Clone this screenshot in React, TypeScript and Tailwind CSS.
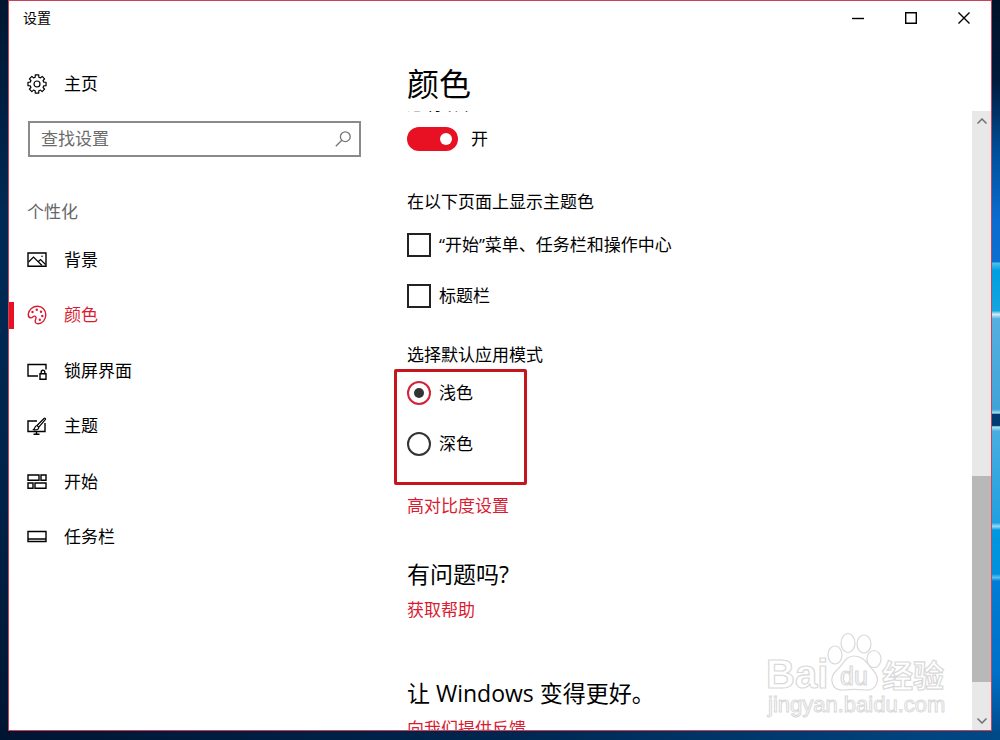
import { useState } from "react";
import type { ReactNode } from "react";

const Icon = ({ children, className = "size-5" }: { children: ReactNode; className?: string }) => (
  <svg viewBox="0 0 20 20" fill="none" stroke="currentColor" strokeWidth="1.4" className={className} aria-hidden="true">
    {children}
  </svg>
);

const gearPoints = Array.from({ length: 8 }, (_, i) => {
  const point = (offset: number, radius: number) => {
    const angle = ((i * 45 + offset) * Math.PI) / 180;
    return `${(10 + radius * Math.cos(angle)).toFixed(2)},${(10 + radius * Math.sin(angle)).toFixed(2)}`;
  };
  return [point(-15, 7), point(-11, 9.2), point(11, 9.2), point(15, 7)].join(" ");
}).join(" ");

const navItems = [
  {
    id: "background",
    label: "背景",
    icon: (
      <Icon>
        <path d="M1 3h18v13.200H1z" />
        <path d="M1.500 12 6.500 7l8.500 8.500M11 12l2.500-2.500 5 5" strokeWidth="1.200" />
        <circle cx="15" cy="6.300" r=".8" fill="currentColor" stroke="none" />
      </Icon>
    ),
  },
  {
    id: "colors",
    label: "颜色",
    icon: (
      <Icon>
        <path d="M1.300 9C1.800 4.500 5.800 1.200 10.500 1.200c4.800 0 8.300 3.800 8.300 8.600 0 5-3.500 8.900-7.800 8.900-2 0-3-1.200-2.800-2.900.2-1.400 1-2 .8-3.300-.3-1.400-1.700-1.800-2.700-1-.9.8-1.300 1.600-2.600 1.400C1.800 12.600 1.100 11 1.300 9Z" />
        <g fill="currentColor" stroke="none">
          <circle cx="5.500" cy="7" r="1.200" />
          <circle cx="9.800" cy="4.700" r="1.200" />
          <circle cx="14" cy="6.700" r="1.200" />
          <circle cx="15.300" cy="11" r="1.200" />
          <circle cx="12.800" cy="14.700" r="1.200" />
        </g>
      </Icon>
    ),
  },
  {
    id: "lockscreen",
    label: "锁屏界面",
    icon: (
      <Icon>
        <path d="M11 15H1V3.500h18v5" />
        <path d="M13 12.700h6v5.500h-6zM14.200 12.500V11a1.800 1.800 0 0 1 3.600 0v1.500" />
      </Icon>
    ),
  },
  {
    id: "themes",
    label: "主题",
    icon: (
      <Icon>
        <path d="M10 5H1v10.500h17V7" />
        <path d="M9.500 15.500v2.500M6.500 18.200h6" />
        <path d="m10 9.500 7-7c1-.8 2 .2 1.300 1.200l-6.500 7.500M10 9.500l1.800 1.700c.2 2.200-2.500 3.200-5.300 2.500 1.500-1 1.200-3.700 3.500-4.200Z" strokeWidth="1.200" />
      </Icon>
    ),
  },
  {
    id: "start",
    label: "开始",
    icon: (
      <Icon>
        <path d="M1 3h11v5.200H1zM14 3h5v5.200h-5zM1 11h5v5.200H1zM8 11h11v5.200H8z" />
      </Icon>
    ),
  },
  {
    id: "taskbar",
    label: "任务栏",
    icon: (
      <Icon>
        <path d="M1 4.500h18v10H1zM1 12h18" />
      </Icon>
    ),
  },
];

const modes = [
  { id: "light", label: "浅色" },
  { id: "dark", label: "深色" },
];

const accentTargets = ["“开始”菜单、任务栏和操作中心", "标题栏"];

const TitleBar = () => (
  <header className="flex h-[34px] shrink-0 items-center justify-between pr-px pl-[14px]">
    <h1 className="text-sm">设置</h1>
    <div className="flex h-full">
      <button aria-label="最小化" className="flex w-[53px] items-center justify-center">
        <svg viewBox="0 0 12 12" className="size-3" stroke="currentColor" strokeWidth="1.400">
          <path d="M0 6.500h12" />
        </svg>
      </button>
      <button aria-label="最大化" className="flex w-[53px] items-center justify-center">
        <svg viewBox="0 0 12 12" className="size-3" fill="none" stroke="currentColor" strokeWidth="1.400">
          <path d="M.7.7h10.600v10.600H.7z" />
        </svg>
      </button>
      <button aria-label="关闭" className="flex w-[53px] items-center justify-center">
        <svg viewBox="0 0 12 12" className="size-3" stroke="currentColor" strokeWidth="1.400">
          <path d="m.5.5 11 11M11.500.5l-11 11" />
        </svg>
      </button>
    </div>
  </header>
);

const Sidebar = ({ active, onSelect }: { active: string; onSelect: (id: string) => void }) => (
  <nav className="flex w-[370px] shrink-0 flex-col">
    <button className="mt-[37px] flex h-6 items-center gap-[17px] pl-[18px]">
      <Icon>
        <polygon points={gearPoints} strokeWidth="1.200" strokeLinejoin="round" />
        <circle cx="10" cy="10" r="3" strokeWidth="1.200" />
      </Icon>
      主页
    </button>
    <div className="mt-[25px] mr-[18px] ml-[19px] flex h-9 items-center border-2 border-[#8a8a8a] pr-2 pl-[11px]">
      <input
        type="text"
        aria-label="查找设置"
        placeholder="查找设置"
        className="min-w-0 flex-1 outline-none placeholder:text-[#6b6b6b]"
      />
      <svg viewBox="0 0 16 16" className="size-4 text-[#777777]" fill="none" stroke="currentColor" strokeWidth="1.300" aria-hidden="true">
        <circle cx="10.300" cy="5.700" r="4.900" />
        <path d="M6.800 9.200.8 15.200" />
      </svg>
    </div>
    <h2 className="mt-[43px] ml-[18px] h-6 leading-6 text-[#666666]">个性化</h2>
    <ul className="mt-2 grid h-[333px] grid-rows-6">
      {navItems.map((item) => (
        <li key={item.id} className="flex items-center">
          <button
            onClick={() => onSelect(item.id)}
            className={`flex h-[27px] w-full items-center gap-[17px] border-l-[5px] pl-[13px] ${
              item.id === active ? "border-[#e81123] text-[#d91c32]" : "border-transparent"
            }`}>
            {item.icon}
            {item.label}
          </button>
        </li>
      ))}
    </ul>
  </nav>
);

const ScrollBar = () => (
  <div className="flex w-[19px] shrink-0 flex-col items-center bg-[#e8e8e8] text-[#707070]">
    <button aria-label="向上滚动" className="flex h-[19px] items-center">
      <svg viewBox="0 0 10 6" className="w-[10px]" fill="none" stroke="currentColor" strokeWidth="1.500">
        <path d="m.5 5.500 4.500-4.500 4.500 4.500" />
      </svg>
    </button>
    <div className="flex w-full flex-1 flex-col">
      <div className="flex-[346]" />
      <div className="w-full flex-[206] bg-[#b8b8b8]" />
      <div className="flex-[29]" />
    </div>
    <button aria-label="向下滚动" className="flex h-[19px] items-center">
      <svg viewBox="0 0 10 6" className="w-[10px]" fill="none" stroke="currentColor" strokeWidth="1.500">
        <path d="m.5.5 4.500 4.500 4.500-4.500" />
      </svg>
    </button>
  </div>
);

const Watermark = () => (
  <svg
    viewBox="0 0 190 95"
    className="pointer-events-none absolute right-[43px] bottom-2 h-[95px] w-[190px]"
    fill="#ffffff"
    stroke="#d9d9d9"
    strokeWidth="1.200"
    aria-hidden="true">
    <g fontFamily="Liberation Sans, Noto Sans CJK SC, sans-serif" fontWeight="bold">
      <text x="8" y="61" fontSize="40">Bai</text>
      <text x="124" y="60" fontSize="31">经验</text>
    </g>
    <ellipse cx="77" cy="28" rx="7" ry="9" />
    <ellipse cx="90" cy="16" rx="7" ry="9.500" />
    <ellipse cx="106" cy="17" rx="7" ry="9" />
    <ellipse cx="116" cy="32" rx="7" ry="8.500" />
    <path d="M96 29c-9 0-11 9-17 14-10 9-4 21 6 20 8-1 14-1 22 0 11 1 17-10 8-20-6-6-9-14-19-14Z" />
    <text x="82" y="58" fontSize="25" fontFamily="Liberation Sans, sans-serif">du</text>
    <text x="10" y="85" fontSize="22" strokeWidth="1" fontFamily="Liberation Sans, sans-serif">jingyan.baidu.com</text>
  </svg>
);

const App = () => {
  const [page, setPage] = useState("colors");
  const [transparency, setTransparency] = useState(true);
  const [mode, setMode] = useState("light");

  return (
    <div className="flex h-screen flex-col bg-[linear-gradient(90deg,#001532,#00264f_50%,#004a87)] font-['Open_Sans','Noto_Sans_CJK_SC',sans-serif] text-[17px] leading-6 text-black">
      <div className="flex min-h-0 flex-1">
        <div className="w-2 shrink-0 bg-[linear-gradient(180deg,#001530,#002a55_30%,#00254c_60%,#001532)]" />
        <div className="relative flex min-w-0 flex-1 flex-col border border-[#c8425a] bg-white">
          <TitleBar />
          <div className="flex min-h-0 flex-1">
            <Sidebar active={page} onSelect={setPage} />
            <main className="flex min-w-0 flex-1 flex-col">
              <h2 className="h-[76px] shrink-0 pt-[25px] pl-7 text-[32px] leading-[48px]">颜色</h2>
              <div className="flex min-h-0 flex-1">
                <div className="min-w-0 flex-1 overflow-hidden pl-7">
                  <h3 className="-mt-[19px] h-6">透明效果</h3>
                  <label className="mt-[11px] flex h-6 w-fit items-center gap-[13px]">
                    <input
                      type="checkbox"
                      role="switch"
                      checked={transparency}
                      onChange={(e) => setTransparency(e.target.checked)}
                      className="flex h-6 w-[51px] appearance-none items-center rounded-full bg-[#8a8a8a] px-[6px] before:size-3 before:rounded-full before:bg-white checked:justify-end checked:bg-[#e81123]"
                    />
                    {transparency ? "开" : "关"}
                  </label>

                  <h3 className="mt-[39px]">在以下页面上显示主题色</h3>
                  <div className="mt-[19px] flex flex-col gap-[27px]">
                    {accentTargets.map((target) => (
                      <label key={target} className="flex h-6 w-fit items-center gap-2">
                        <input type="checkbox" className="size-6 appearance-none border-2 border-[#222222] checked:bg-[#e81123]" />
                        {target}
                      </label>
                    ))}
                  </div>

                  <h3 className="mt-[35px]">选择默认应用模式</h3>
                  <fieldset
                    aria-label="选择默认应用模式"
                    className="mt-[2px] -ml-[13px] flex h-[116px] w-[133px] flex-col gap-[27px] rounded-xs border-3 border-[#c4161c] pt-[9px] pl-[10px]">
                    {modes.map((m) => (
                      <label key={m.id} className="flex h-6 w-fit items-center gap-2">
                        <input
                          type="radio"
                          name="mode"
                          checked={mode === m.id}
                          onChange={() => setMode(m.id)}
                          className="flex size-6 appearance-none items-center justify-center rounded-full border-2 border-[#333333] checked:border-[#d2233a] checked:before:size-[10px] checked:before:rounded-full checked:before:bg-[#333333]"
                        />
                        {m.label}
                      </label>
                    ))}
                  </fieldset>

                  <a href="#contrast" className="mt-[9px] block w-fit text-[#d91c32]">
                    高对比度设置
                  </a>
                  <h3 className="mt-10 text-[23px] leading-8">有问题吗?</h3>
                  <a href="#help" className="mt-2 block w-fit text-[#d91c32]">
                    获取帮助
                  </a>
                  <h3 className="mt-[55px] text-[23px] leading-8">让 Windows 变得更好。</h3>
                  <a href="#feedback" className="mt-2 block w-fit text-[#d91c32]">
                    向我们提供反馈
                  </a>
                </div>
                <ScrollBar />
              </div>
            </main>
          </div>
          <Watermark />
        </div>
        <div className="w-2 shrink-0 bg-[linear-gradient(180deg,#001228_0%,#001a3c_11%,#00509c_21%,#0a6cd0_30%,#0b6fd0_35.800%,#4cc0ee_36%,#009fe0_37%,#14a4e0_42.500%,#d0eef8_43%,#55b0e0_43.600%,#3fa3d8_56%,#a8e0f4_56.500%,#003a70_56.700%,#003a70_58.200%,#b0e4f6_58.400%,#48aee0_59%,#20a0e0_71.500%,#98dcf6_72%,#0098e0_72.500%,#0090dc_78.500%,#58c0f0_79%,#007cd4_79.500%,#0070c8_92%,#004c90_100%)]" />
      </div>
      <div className="h-[9px] shrink-0" />
    </div>
  );
};

export default App;
